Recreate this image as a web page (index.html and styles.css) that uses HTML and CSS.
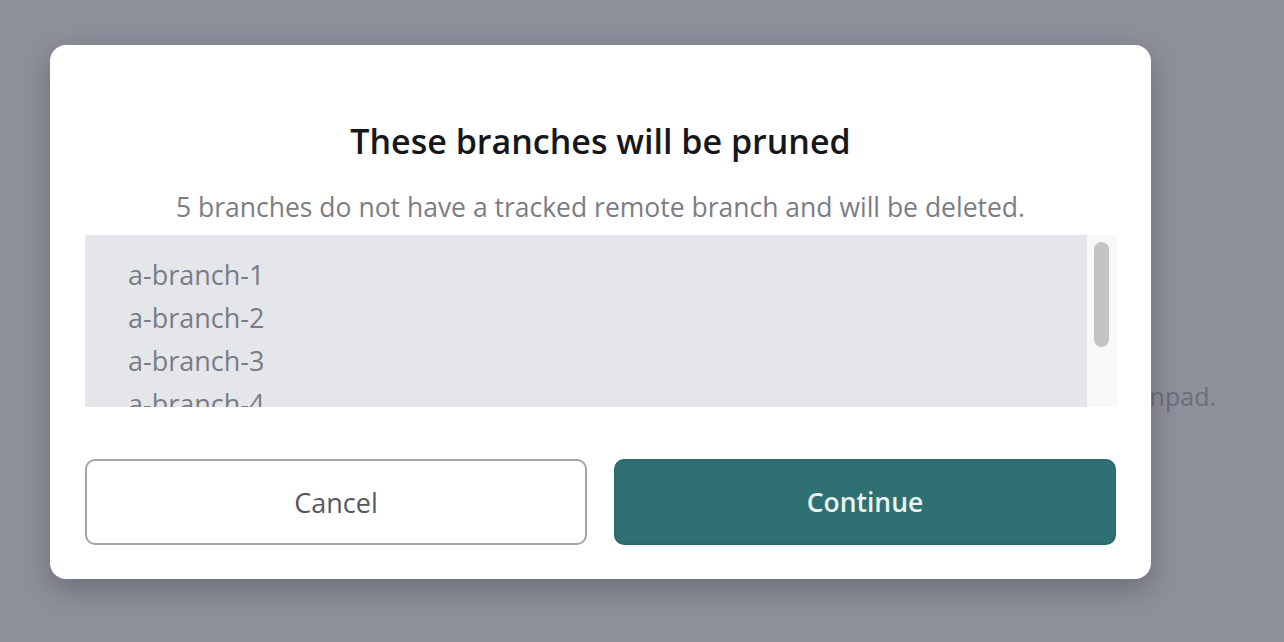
FILE: index.html
```html
<!DOCTYPE html>
<html lang="en">
<head>
<meta charset="utf-8">
<title>Prune branches</title>
<link rel="stylesheet" href="styles.css">
</head>
<body>
<div class="backdrop">
  <p class="bg-text">Confirm the action on your pinpad.</p>
  <div class="modal">
    <h1 class="title">These branches will be pruned</h1>
    <p class="subtitle">5 branches do not have a tracked remote branch and will be deleted.</p>
    <div class="list-wrap">
      <ul class="list">
        <li>a-branch-1</li>
        <li>a-branch-2</li>
        <li>a-branch-3</li>
        <li>a-branch-4</li>
        <li>a-branch-5</li>
      </ul>
      <div class="track"><div class="thumb"></div></div>
    </div>
    <div class="actions">
      <button class="btn btn-cancel">Cancel</button>
      <button class="btn btn-continue">Continue</button>
    </div>
  </div>
</div>
</body>
</html>
```

FILE: styles.css
```css
* { box-sizing: border-box; }
html, body { margin: 0; padding: 0; }
body {
  width: 1284px;
  height: 642px;
  overflow: hidden;
  font-family: "Open Sans", "Noto Sans", sans-serif;
  background: #8e909c;
}
.backdrop {
  position: relative;
  width: 1284px;
  height: 642px;
  background: #8e909c;
  padding: 45px 0 0 50px;
}
.bg-text {
  position: absolute;
  right: 68px;
  top: 379px;
  margin: 0;
  font-size: 25px;
  color: #6c6f7a;
}
.modal {
  position: relative;
  width: 1101px;
  height: 534px;
  background: #ffffff;
  border-radius: 16px;
  box-shadow: 0 10px 30px rgba(40, 42, 55, 0.35);
  padding: 0 35px;
  display: flex;
  flex-direction: column;
  align-items: stretch;
}
.title {
  margin: 74px 0 0;
  text-align: center;
  font-size: 34px;
  font-weight: 600;
  color: #16171b;
  line-height: 44px;
}
.subtitle {
  margin: 27px 0 0;
  text-align: center;
  font-size: 26.5px;
  line-height: 34px;
  color: #7b7d84;
}
.list-wrap {
  margin-top: 11px;
  height: 172px;
  width: 1032px;
  display: flex;
  overflow: hidden;
}
.list {
  flex: 1;
  margin: 0;
  list-style: none;
  padding: 18px 0 0 43px;
  background: #e5e6ea;
  border-radius: 3px 0 0 3px;
}
.list li {
  font-size: 27px;
  line-height: 43px;
  height: 43px;
  color: #7a7c85;
}
.track {
  width: 30px;
  background: #f8f8f9;
  padding: 7px 0 0 7px;
}
.thumb {
  width: 15px;
  height: 105px;
  border-radius: 8px;
  background: #c3c3c5;
}
.actions {
  margin-top: 52px;
  display: flex;
  gap: 27px;
}
.btn {
  flex: 1;
  height: 86px;
  border-radius: 10px;
  font-family: "Open Sans", "Noto Sans", sans-serif;
  font-size: 27px;
  cursor: pointer;
}
.btn-cancel {
  background: #ffffff;
  border: 2px solid #a3a4a8;
  color: #55575e;
}
.btn-continue {
  background: #2f7073;
  border: 2px solid #2c6a6d;
  color: #e8f4f4;
  font-weight: 600;
  font-size: 26.5px;
}
```
